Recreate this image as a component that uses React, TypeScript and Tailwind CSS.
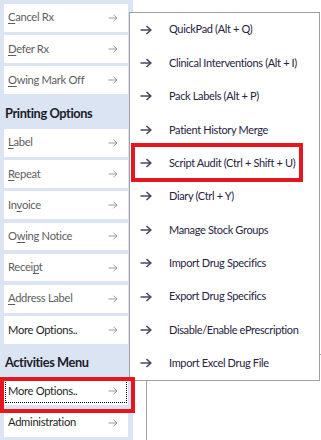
import React from "react";

type Item = { pre: string; key?: string; post?: string; dark?: boolean };

const top: Item[] = [
  { pre: "", key: "C", post: "ancel Rx" },
  { pre: "", key: "D", post: "efer Rx" },
  { pre: "", key: "O", post: "wing Mark Off" },
];

const printing: Item[] = [
  { pre: "", key: "L", post: "abel" },
  { pre: "", key: "R", post: "epeat" },
  { pre: "In", key: "v", post: "oice" },
  { pre: "O", key: "w", post: "ing Notice" },
  { pre: "Recei", key: "p", post: "t" },
  { pre: "", key: "A", post: "ddress Label" },
  { pre: "More Options..", dark: true },
];

const menu = [
  "QuickPad (Alt + Q)",
  "Clinical Interventions (Alt + I)",
  "Pack Labels (Alt + P)",
  "Patient History Merge",
  "Script Audit (Ctrl + Shift + U)",
  "Diary (Ctrl + Y)",
  "Manage Stock Groups",
  "Import Drug Specifics",
  "Export Drug Specifics",
  "Disable/Enable ePrescription",
  "Import Excel Drug File",
];

function SmallArrow() {
  return (
    <svg width="10" height="8" viewBox="0 0 10 8" className="shrink-0">
      <path d="M0.5 4H9M5.5 0.8L9 4L5.5 7.2" fill="none" stroke="#9b9b9b" strokeWidth="1" />
    </svg>
  );
}

function MenuArrow() {
  return (
    <svg width="12" height="10" viewBox="0 0 12 10" className="shrink-0">
      <path d="M0.5 5H11M6.5 1L10.8 5L6.5 9" fill="none" stroke="#4c4a5e" strokeWidth="1.6" />
    </svg>
  );
}

function SideButton({ item, focused }: { item: Item; focused?: boolean }) {
  return (
    <div className="relative mb-[3.5px] flex h-[28px] items-center justify-between bg-white pl-[4px] pr-[10px]">
      <span
        className={`whitespace-nowrap text-[11.2px] tracking-[-0.3px] ${item.dark ? "text-[#1f1f1f]" : "text-[#5e5e5e]"}`}
      >
        {item.pre}
        {item.key && <span className="underline underline-offset-2">{item.key}</span>}
        {item.post}
      </span>
      <SmallArrow />
      {focused && <div className="absolute inset-x-[1px] inset-y-[2px] border border-dotted border-black" />}
    </div>
  );
}

export default function App() {
  return (
    <div className="relative flex h-[440px] w-[321px] overflow-hidden bg-white font-['Lato',sans-serif]">
      <div className="flex w-[133px] shrink-0 flex-col bg-[#dae4f3] pl-[4px] pr-[5px] pt-[4px]">
        {top.map((t) => (
          <SideButton key={t.post} item={t} />
        ))}
        <div className="flex h-[31.5px] items-center pl-[1px] text-[12.8px] font-bold tracking-[-0.4px] text-[#1c1c2a]">
          Printing Options
        </div>
        {printing.map((t) => (
          <SideButton key={t.pre + (t.post ?? "")} item={t} />
        ))}
        <div className="flex h-[30.5px] items-center pl-[1px] text-[12.8px] font-bold tracking-[-0.4px] text-[#1c1c2a]">
          Activities Menu
        </div>
        <SideButton item={{ pre: "More Options..", dark: true }} focused />
        <SideButton item={{ pre: "Administration", dark: true }} />
      </div>

      <div className="flex-1">
        <div className="ml-[13px] mt-[354px] h-full border-l border-t border-[#a0a0a0]" />
      </div>

      {/* popup menu */}
      <div className="absolute left-[129px] top-[12px] flex h-[369px] w-[191px] flex-col border border-[#a0a0a0] bg-white">
        {menu.map((m) => (
          <div
            key={m}
            className="flex flex-1 items-center gap-[17px] whitespace-nowrap pl-[10px] text-[11px] tracking-[-0.35px] text-[#28233f]"
          >
            <MenuArrow />
            <span>{m}</span>
          </div>
        ))}
      </div>

      {/* annotation boxes */}
      <div className="absolute left-[131px] top-[143px] h-[39px] w-[172px] border-4 border-[#e5161f]" />
      <div className="absolute left-0 top-[377px] h-[36px] w-[135px] border-4 border-[#e5161f]" />
    </div>
  );
}
